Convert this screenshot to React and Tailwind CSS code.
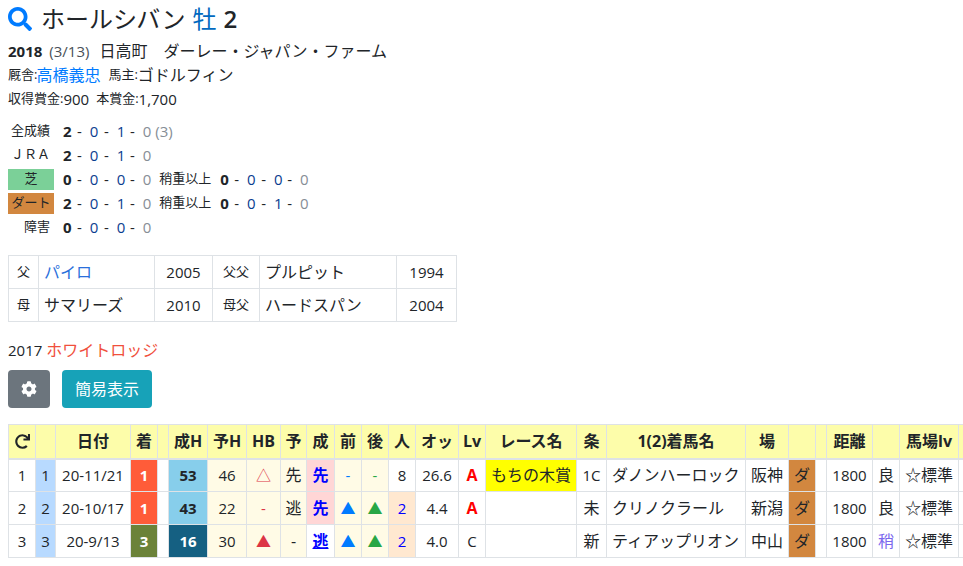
import { FaSearch, FaCog, FaRedo } from 'react-icons/fa';

const widths = [27, 20, 75, 27, 11, 39, 39, 34, 26, 28, 27, 27, 27, 43, 27, 91, 30, 139, 43, 27, 11, 46, 27, 59, 20];
const headers = ['', '', '日付', '着', '', '成H', '予H', 'HB', '予', '成', '前', '後', '人', 'オッ', 'Lv', 'レース名', '条', '1(2)着馬名', '場', '', '', '距離', '', '馬場lv', ''];

const td = 'border border-[#dee2e6] text-center p-0 whitespace-nowrap overflow-hidden';
const tdLeft = 'border border-[#dee2e6] pl-[5px] text-[16px] whitespace-nowrap overflow-hidden';
const up = <span className="text-[#007bff]">▲</span>;
const upG = <span className="text-[#28a745]">▲</span>;
const upR = <span className="text-[#dc3545]">▲</span>;

const rows = [
  { no: '1', date: '20-11/21', rank: '1', rankBg: 'bg-[#ff5c39]', h: '53', hBg: 'bg-[#87ceeb] text-[#212529]', pre: '46', hb: <span className="text-[#dc3545]">△</span>, yo: '先', sei: '先', seiBg: 'bg-[#ffd6d6]', mae: <span className="text-[#007bff]">-</span>, ato: <span className="text-[#28a745]">-</span>, pop: '8', popCls: '', odds: '26.6', lv: 'A', race: 'もちの木賞', raceBg: 'bg-[#ffff00]', cond: '1C', condCls: 'text-[15px]', horse: 'ダノンハーロック', place: '阪神', baba: '良', babaCls: '' },
  { no: '2', date: '20-10/17', rank: '1', rankBg: 'bg-[#ff5c39]', h: '43', hBg: 'bg-[#87ceeb] text-[#212529]', pre: '22', hb: <span className="text-[#dc3545]">-</span>, yo: '逃', sei: '先', seiBg: 'bg-[#ffd6d6]', mae: up, ato: upG, pop: '2', popCls: 'bg-[#ffe8d0] text-[#0000ff]', odds: '4.4', lv: 'A', race: '', raceBg: '', cond: '未', condCls: 'text-[16px]', horse: 'クリノクラール', place: '新潟', baba: '良', babaCls: '' },
  { no: '3', date: '20-9/13', rank: '3', rankBg: 'bg-[#6b8239]', h: '16', hBg: 'bg-[#156082] text-white', pre: '30', hb: upR, yo: '-', sei: '逃', seiBg: '', mae: up, ato: upG, pop: '2', popCls: 'bg-[#ffe8d0] text-[#0000ff]', odds: '4.0', lv: 'C', race: '', raceBg: '', cond: '新', condCls: 'text-[16px]', horse: 'ティアップリオン', place: '中山', baba: '稍', babaCls: 'text-[#7b68ee]' },
];

function Nums({ nums }) {
  return (
    <div className="flex ml-[9px]">
      <b className="w-[14px]">{nums[0]}</b>
      <span className="w-[27px]">- <span className="ml-[4px] text-[#0a3d8f]">{nums[1]}</span></span>
      <span className="w-[26px]">- <span className="ml-[4px] text-[#0a3d8f]">{nums[2]}</span></span>
      <span>- <span className="ml-[4px] text-[#868e96]">{nums[3]}</span></span>
    </div>
  );
}

function Record({ label, nums, extra, labelBg }) {
  return (
    <div className="flex h-6 items-center">
      {labelBg
        ? <div className={`w-[46px] h-[21px] flex items-center justify-center text-[13px] ${labelBg}`}>{label}</div>
        : <div className="w-[46px] h-[21px] flex items-center justify-end pr-[4px] text-[13px]">{label}</div>}
      <Nums nums={nums} />
      {extra}
    </div>
  );
}

export default function App() {
  return (
    <div className="w-[963px] h-[566px] overflow-hidden bg-white text-[#212529] text-[15px] font-['Open_Sans','Noto_Sans_CJK_JP',sans-serif]">
      <div className="pl-2 pt-[3px]">
        <div className="flex items-center h-[32px] text-[24px] leading-[32px]">
          <FaSearch className="text-[#007bff] text-[24px] mr-[9px]" />
          <span>ホールシバン</span>
          <span className="text-[#0069c0] ml-[7px]">牡</span>
          <span className="font-semibold ml-[7px]">2</span>
        </div>
        <div className="h-[24px] mt-[4px] flex items-center text-[16px]">
          <b className="text-[15px]">2018</b>
          <span className="text-[15px] ml-[7px] text-[#495057]">(3/13)</span>
          <span className="ml-[10px]">日高町</span>
          <span className="ml-[16px]">ダーレー・ジャパン・ファーム</span>
        </div>
        <div className="h-[24px] flex items-center text-[16px]">
          <span className="text-[13px] mr-[-1px]">厩舎:</span>
          <span className="text-[#007bff]">高橋義忠</span>
          <span className="text-[13px] ml-[8px]">馬主:</span>
          <span>ゴドルフィン</span>
        </div>
        <div className="h-[24px] flex items-center">
          <span className="text-[13px]">収得賞金:</span>900
          <span className="text-[13px] ml-[7px]">本賞金:</span>1,700
        </div>

        <div className="mt-[8px]">
          <Record label="全成績" nums={['2', '0', '1', '0']} extra={<span className="ml-[4px] text-[#868e96]">(3)</span>} />
          <Record label="ＪＲＡ" nums={['2', '0', '1', '0']} />
          <Record label="芝" labelBg="bg-[#7bd098]" nums={['0', '0', '0', '0']} extra={<><span className="ml-[8px] text-[13px]">稍重以上</span><Nums nums={['0', '0', '0', '0']} /></>} />
          <Record label="ダート" labelBg="bg-[#d2873f]" nums={['2', '0', '1', '0']} extra={<><span className="ml-[8px] text-[13px]">稍重以上</span><Nums nums={['0', '0', '1', '0']} /></>} />
          <Record label="障害" nums={['0', '0', '0', '0']} />
        </div>

        <table className="mt-[16px] w-[449px] table-fixed border-collapse">
          <colgroup>
            <col className="w-[30px]" /><col className="w-[116px]" /><col className="w-[58px]" /><col className="w-[47px]" /><col className="w-[137px]" /><col className="w-[60px]" />
          </colgroup>
          <tbody>
            <tr className="h-[33px]">
              <td className={`${td} text-[13px]`}>父</td>
              <td className={`${tdLeft} text-[#2a6fdb]`}>パイロ</td>
              <td className={td}>2005</td>
              <td className={`${td} text-[13px]`}>父父</td>
              <td className={tdLeft}>プルピット</td>
              <td className={td}>1994</td>
            </tr>
            <tr className="h-[33px]">
              <td className={`${td} text-[13px]`}>母</td>
              <td className={tdLeft}>サマリーズ</td>
              <td className={td}>2010</td>
              <td className={`${td} text-[13px]`}>母父</td>
              <td className={tdLeft}>ハードスパン</td>
              <td className={td}>2004</td>
            </tr>
          </tbody>
        </table>

        <div className="mt-[18px] h-[21px] leading-[21px]">
          2017 <span className="text-[#f0503c] text-[16px]">ホワイトロッジ</span>
        </div>

        <div className="mt-[9px] flex gap-[12px]">
          <button className="w-[42px] h-[38px] rounded bg-[#6c757d] text-white flex items-center justify-center"><FaCog className="text-[16px]" /></button>
          <button className="w-[90px] h-[38px] rounded bg-[#17a2b8] text-white text-[16px] flex items-center justify-center">簡易表示</button>
        </div>
      </div>

      <table className="ml-2 mt-[16px] w-[970px] table-fixed border-collapse">
        <colgroup>
          {widths.map((w, i) => <col key={i} style={{ width: w }} />)}
        </colgroup>
        <thead>
          <tr className="h-[34px] bg-[#fdfdaa] border-b-2 border-b-[#dee2e6]">
            {headers.map((h, i) => (
              <th key={i} className={`${td} font-bold text-[16px]`}>
                {i === 0 ? <FaRedo className="text-[15px] mx-auto" /> : h}
              </th>
            ))}
          </tr>
        </thead>
        <tbody>
          {rows.map(r => (
            <tr key={r.no} className="h-[33px]">
              <td className={td}>{r.no}</td>
              <td className={`${td} bg-[#b8daff]`}>{r.no}</td>
              <td className={td}>{r.date}</td>
              <td className={`${td} ${r.rankBg} text-white font-bold`}>{r.rank}</td>
              <td className={td}></td>
              <td className={`${td} ${r.hBg} font-bold`}>{r.h}</td>
              <td className={`${td} bg-[#fffbe6]`}>{r.pre}</td>
              <td className={`${td} bg-[#fffbe6]`}>{r.hb}</td>
              <td className={`${td} bg-[#fffbe6] text-[16px]`}>{r.yo}</td>
              <td className={`${td} ${r.seiBg} text-[#0000ff] font-bold text-[16px] ${r.sei === '逃' ? 'underline' : ''}`}>{r.sei}</td>
              <td className={`${td} bg-[#fffbe6]`}>{r.mae}</td>
              <td className={`${td} bg-[#fffbe6]`}>{r.ato}</td>
              <td className={`${td} ${r.popCls}`}>{r.pop}</td>
              <td className={td}>{r.odds}</td>
              <td className={`${td} ${r.lv === 'A' ? 'text-[#ff0000] font-bold text-[16px]' : ''}`}>{r.lv}</td>
              <td className={`${td} ${r.raceBg} text-[16px]`}>{r.race}</td>
              <td className={`${td} ${r.condCls}`}>{r.cond}</td>
              <td className={tdLeft}>{r.horse}</td>
              <td className={`${td} text-[16px]`}>{r.place}</td>
              <td className={`${td} bg-[#d2873f] text-[16px]`}>ダ</td>
              <td className={td}></td>
              <td className={td}>1800</td>
              <td className={`${td} text-[16px] ${r.babaCls}`}>{r.baba}</td>
              <td className={`${td} text-[16px]`}>☆標準</td>
              <td className={td}></td>
            </tr>
          ))}
        </tbody>
      </table>
    </div>
  );
}
